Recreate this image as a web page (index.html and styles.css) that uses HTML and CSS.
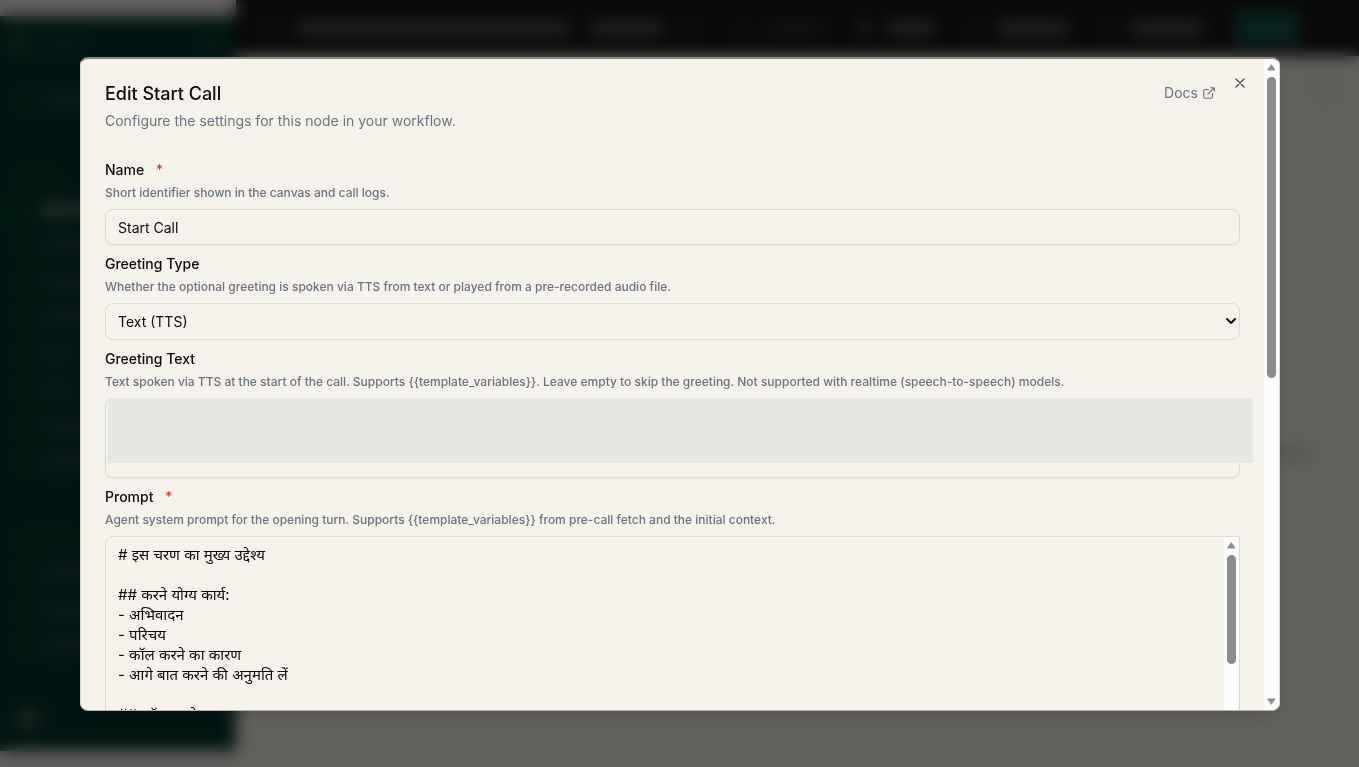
FILE: index.html
```html
<!DOCTYPE html>
<html lang="en">
<head>
<meta charset="utf-8">
<meta name="viewport" content="width=device-width, initial-scale=1">
<title>Edit Start Call</title>
<link rel="stylesheet" href="styles.css">
</head>
<body>
<div class="app" aria-hidden="true">
  <aside class="sidebar">
    <div class="side-brand"><i class="blob logo"></i><i class="bar w-40"></i><i class="blob toggle"></i></div>
    <div class="side-item lone"><i class="blob"></i><i class="bar w-80"></i></div>
    <div class="side-title"><i class="bar w-40"></i></div>
    <div class="side-item active"><i class="blob"></i><i class="bar w-80"></i></div>
    <div class="side-item"><i class="blob"></i><i class="bar w-80"></i></div>
    <div class="side-item"><i class="blob"></i><i class="bar w-80"></i></div>
    <div class="side-item"><i class="blob"></i><i class="bar w-80"></i></div>
    <div class="side-item"><i class="blob"></i><i class="bar w-32"></i></div>
    <div class="side-item"><i class="blob"></i><i class="bar w-32"></i></div>
    <div class="side-item"><i class="blob"></i><i class="bar w-80"></i></div>
    <div class="side-item"><i class="blob"></i><i class="bar w-80"></i></div>
    <div class="side-title second"><i class="bar w-60"></i></div>
    <div class="side-item"><i class="blob"></i><i class="bar w-80"></i></div>
    <div class="side-item"><i class="blob"></i><i class="bar w-80"></i></div>
    <div class="side-item"><i class="blob"></i><i class="bar w-80"></i></div>
    <div class="side-foot"><i class="blob avatar"></i></div>
  </aside>
  <div class="main">
    <div class="topbar">
      <i class="blob dim"></i><i class="bar top-name"></i><i class="bar top-version"></i><i class="blob dim"></i>
      <div class="top-actions">
        <span class="top-action"><i class="blob dim"></i><i class="bar w-60 dim"></i></span>
        <span class="top-action"><i class="blob"></i><i class="bar w-48"></i></span>
        <span class="top-action"><i class="blob dim"></i><i class="bar w-72"></i></span>
        <span class="top-action"><i class="blob dim"></i><i class="bar w-72"></i></span>
        <span class="top-save"></span>
      </div>
    </div>
    <div class="canvas"><i class="canvas-tool"></i><i class="canvas-node"></i></div>
  </div>
</div>

<div class="overlay">
  <div class="dialog" role="dialog" aria-modal="true" aria-labelledby="dialog-title" aria-describedby="dialog-desc">
    <div class="dialog-body">
      <header class="dialog-head">
        <div>
          <h2 id="dialog-title" class="dialog-title">Edit Start Call</h2>
          <p id="dialog-desc" class="dialog-desc">Configure the settings for this node in your workflow.</p>
        </div>
        <a class="docs" href="#docs">Docs
          <svg class="docs-icon" viewBox="0 0 24 24" aria-hidden="true"><path d="M15 3h6v6M10 14 21 3M18 13v6a2 2 0 0 1-2 2H5a2 2 0 0 1-2-2V8a2 2 0 0 1 2-2h6"/></svg>
        </a>
      </header>
      <form class="form">
        <div class="field">
          <label class="label" for="name">Name <span class="required">*</span></label>
          <p class="hint">Short identifier shown in the canvas and call logs.</p>
          <input class="control" id="name" type="text" value="Start Call">
        </div>
        <div class="field">
          <label class="label" for="greeting-type">Greeting Type</label>
          <p class="hint">Whether the optional greeting is spoken via TTS from text or played from a pre-recorded audio file.</p>
          <div class="select-wrap">
            <select class="control select" id="greeting-type"><option>Text (TTS)</option></select>
            <svg class="chevron" viewBox="0 0 10 6" aria-hidden="true"><path d="m1 1 4 4 4-4"/></svg>
          </div>
        </div>
        <div class="field">
          <label class="label" for="greeting-text">Greeting Text</label>
          <p class="hint">Text spoken via TTS at the start of the call. Supports {{template_variables}}. Leave empty to skip the greeting. Not supported with realtime (speech-to-speech) models.</p>
          <div class="masked">
            <textarea class="control greeting" id="greeting-text"></textarea>
            <div class="mask"></div>
          </div>
        </div>
        <div class="field">
          <label class="label" for="prompt">Prompt <span class="required">*</span></label>
          <p class="hint">Agent system prompt for the opening turn. Supports {{template_variables}} from pre-call fetch and the initial context.</p>
          <div class="prompt-box">
            <textarea class="prompt" id="prompt"># इस चरण का मुख्य उद्देश्य

## करने योग्य कार्य:
- अभिवादन
- परिचय
- कॉल करने का कारण
- आगे बात करने की अनुमति लें

## कॉल करने
</textarea>
            <div class="scrollbar">
              <svg class="arrow" viewBox="0 0 9 7" aria-hidden="true"><path d="M4.500 1 8 6H1z"/></svg>
              <div class="thumb prompt-thumb"></div>
            </div>
          </div>
        </div>
      </form>
      <button class="close" type="button" aria-label="Close">
        <svg viewBox="0 0 24 24" aria-hidden="true"><path d="M18 6 6 18M6 6l12 12"/></svg>
      </button>
    </div>
    <div class="scrollbar">
      <svg class="arrow" viewBox="0 0 9 7" aria-hidden="true"><path d="M4.500 1 8 6H1z"/></svg>
      <div class="thumb dialog-thumb"></div>
      <svg class="arrow down" viewBox="0 0 9 7" aria-hidden="true"><path d="M4.500 6 8 1H1z"/></svg>
    </div>
  </div>
</div>
</body>
</html>
```
FILE: styles.css
```css
* { box-sizing: border-box; }

body {
  margin: 0;
  height: 100vh;
  overflow: hidden;
  background: #f5f2eb;
  color: #0c0c0c;
  font-family: Inter, "Noto Sans", sans-serif;
  font-size: 14px;
  line-height: 20px;
}

h2, p { margin: 0; }

/* Application behind the dialog */
.app { display: flex; height: 100vh; }

.sidebar {
  width: 236px;
  margin: 16px 0;
  padding: 8px 8px 0;
  background: #04362d;
  display: flex;
  flex-direction: column;
  flex: none;
}

.bar, .blob { display: block; height: 14px; background: #1e4c44; }
.blob { width: 14px; border-radius: 7px; background: #12443a; }
.w-32 { width: 32px; }
.w-40 { width: 40px; }
.w-48 { width: 48px; }
.w-60 { width: 60px; }
.w-72 { width: 72px; }
.w-80 { width: 80px; }

.side-brand, .side-item, .side-title {
  display: flex;
  align-items: center;
  gap: 12px;
  height: 36px;
  padding: 0 8px;
  flex: none;
}
.side-brand .bar { background: #0e4439; }
.logo { width: 24px; height: 24px; border-radius: 12px; background: #1c4f43; margin-left: -8px; }
.toggle { margin-left: auto; background: #1c4c41; }
.lone { margin-top: 22px; }
.side-title { height: 36px; margin-top: 42px; margin-bottom: -4px; }
.side-title .bar { background: #0c4034; }
.second { margin-top: 44px; }
.active { margin: 0 -8px; padding: 0 16px; background: linear-gradient(90deg, #00442f, #04362d 60px); }
.active .bar { background: #5c746e; }
.side-foot { margin-top: auto; padding: 0 8px 20px; }
.avatar { width: 24px; height: 24px; border-radius: 12px; background: #3c5a52; }

.main { flex: 1; display: flex; flex-direction: column; min-width: 0; }
.topbar {
  display: flex;
  align-items: center;
  height: 56px;
  padding: 0 60px 0 26px;
  gap: 20px;
  background: #191919;
}
.topbar .bar, .topbar .blob { height: 16px; background: #505050; flex: none; }
.topbar .dim { background: #2e2e2e; }
.top-name { width: 274px; }
.top-version { width: 74px; }
.top-actions { display: flex; align-items: center; gap: 32px; margin-left: auto; }
.top-action { display: flex; align-items: center; gap: 16px; }
.top-save { width: 64px; height: 34px; background: #165850; }
.canvas { flex: 1; display: flex; flex-direction: column; align-items: flex-end; padding: 20px 20px 0; }
.canvas-tool { width: 24px; height: 24px; background: #ebe7e0; }
.canvas-node { width: 48px; height: 16px; margin: 346px 30px 0; background: #dad7d0; }

/* Dialog */
.overlay {
  position: fixed;
  inset: 0;
  display: flex;
  padding: 57px 79px 56px 80px;
  background: rgba(0, 0, 0, 0.6);
  backdrop-filter: blur(8px);
}

.dialog {
  display: flex;
  flex: 1;
  min-width: 0;
  overflow: hidden;
  border: 1px solid #dcd8cc;
  border-top: 2px solid #8a8780;
  border-bottom-color: #b5b2a9;
  border-radius: 8px;
  background: #f5f2eb;
  box-shadow: 0 10px 15px -3px rgba(0, 0, 0, 0.1);
}

.dialog-body {
  position: relative;
  flex: 1;
  min-width: 0;
  overflow: hidden;
  padding: 23px 24px 0;
}

.dialog-head {
  display: flex;
  justify-content: space-between;
  align-items: flex-start;
  padding-right: 24px;
}
.dialog-title { font-size: 18px; line-height: 24px; font-weight: 500; }
.dialog-desc { margin-top: 5px; color: #6b7280; }
.docs {
  display: flex;
  align-items: center;
  gap: 4px;
  margin-top: 1px;
  color: #6b7280;
  text-decoration: none;
}
.docs-icon { width: 14px; height: 14px; }
svg { display: block; fill: none; stroke: currentColor; stroke-width: 2; stroke-linecap: round; stroke-linejoin: round; }

.close {
  position: absolute;
  top: 16px;
  right: 16px;
  width: 16px;
  height: 16px;
  padding: 0;
  border: 0;
  background: none;
  color: #4b4a48;
}

.form { display: flex; flex-direction: column; gap: 12px; margin-top: 32px; }
.field { display: flex; flex-direction: column; }
.label { line-height: 14px; font-weight: 500; }
.required { margin-left: 8px; font-weight: 400; color: #dc2626; }
.hint { margin: 8px 0; font-size: 12px; line-height: 16px; font-weight: 500; color: #6b7280; }

.control {
  display: block;
  width: 100%;
  height: 36px;
  margin: 0;
  padding: 0 12px;
  border: 1px solid #dcd9cf;
  border-radius: 8px;
  background: transparent;
  box-shadow: 0 1px 2px rgba(0, 0, 0, 0.05);
  color: inherit;
  font: inherit;
}
.select-wrap { position: relative; }
.select { appearance: none; height: 37px; box-shadow: none; }
.chevron {
  position: absolute;
  right: 4px;
  top: 15px;
  width: 10px;
  height: 6px;
  pointer-events: none;
}

.masked { position: relative; }
.greeting { height: 80px; resize: none; }
.mask {
  position: absolute;
  top: 0;
  left: 3px;
  right: -13px;
  height: 65px;
  background: #e5e7e2;
}

.prompt-box {
  display: flex;
  height: 320px;
  overflow: hidden;
  border: 1px solid #dcd9cf;
  border-radius: 8px 0 0 8px;
}
.prompt {
  flex: 1;
  margin: 0;
  padding: 8px 12px;
  border: 0;
  overflow: hidden;
  resize: none;
  background: transparent;
  color: inherit;
  font: inherit;
  font-size: 15px;
}

.scrollbar {
  display: flex;
  flex-direction: column;
  align-items: center;
  flex: none;
  width: 15px;
  padding: 5px 0;
  background: #fcfcfc;
}
.arrow { width: 9px; height: 7px; fill: #8b8b8b; stroke: #8b8b8b; stroke-width: 1; flex: none; }
.thumb { width: 9px; margin-top: 6px; border-radius: 5px; background: #8b8b8b; }
.prompt-thumb { height: 109px; }
.dialog-thumb { height: 47%; }
.down { margin-top: auto; }
```
